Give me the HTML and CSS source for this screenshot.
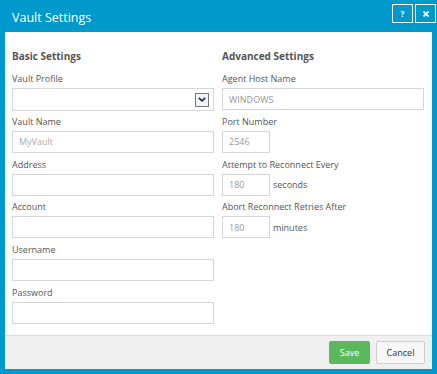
FILE: index.html
```html
<!DOCTYPE html>
<html lang="en">
<head>
    <meta charset="UTF-8">
    <title>Vault Settings</title>
    <link rel="stylesheet" href="styles.css">
</head>
<body>
    <div class="dialog">
        <div class="titlebar">
            <span class="title">Vault Settings</span>
            <div class="title-buttons">
                <button class="tb-btn">?</button>
                <button class="tb-btn">
                    <svg width="6" height="6" viewBox="0 0 6 6"><path d="M0.5 0.5L5.5 5.5M5.5 0.5L0.5 5.5" stroke="#fff" stroke-width="1.8"/></svg>
                </button>
            </div>
        </div>

        <div class="content">
            <div class="column">
                <h3>Basic Settings</h3>
                <label>Vault Profile</label>
                <div class="select">
                    <span class="arrow">
                        <svg width="8" height="5" viewBox="0 0 8 5"><path d="M0.8 0.8L4 3.8L7.2 0.8" fill="none" stroke="#1c2a55" stroke-width="1.6"/></svg>
                    </span>
                </div>
                <label>Vault Name</label>
                <input class="field" type="text" placeholder="MyVault">
                <label>Address</label>
                <input class="field" type="text">
                <label>Account</label>
                <input class="field" type="text">
                <label>Username</label>
                <input class="field" type="text">
                <label>Password</label>
                <input class="field" type="password">
            </div>

            <div class="column">
                <h3>Advanced Settings</h3>
                <label>Agent Host Name</label>
                <input class="field" type="text" value="WINDOWS">
                <label>Port Number</label>
                <input class="field short" type="text" value="2546">
                <label>Attempt to Reconnect Every</label>
                <div class="inline">
                    <input class="field short" type="text" value="180">
                    <span class="unit">seconds</span>
                </div>
                <label>Abort Reconnect Retries After</label>
                <div class="inline">
                    <input class="field short" type="text" value="180">
                    <span class="unit">minutes</span>
                </div>
            </div>
        </div>

        <div class="footer">
            <button class="btn btn-save">Save</button>
            <button class="btn btn-cancel">Cancel</button>
        </div>
    </div>
</body>
</html>
```

FILE: styles.css
```css
* {
    box-sizing: border-box;
    font-family: "Open Sans", sans-serif;
}

body {
    margin: 0;
    background: #fff;
}

.dialog {
    width: 437px;
    height: 374px;
    background: #0099cc;
    padding: 0 5px 5px 5px;
    display: flex;
    flex-direction: column;
}

.titlebar {
    height: 32px;
    display: flex;
    align-items: flex-start;
    justify-content: space-between;
    margin-right: -4px;
}

.title {
    color: #fff;
    font-size: 12.5px;
    line-height: 18px;
    margin: 9px 0 0 7px;
}

.title-buttons {
    display: flex;
    gap: 2px;
    margin-top: 4px;
}

.tb-btn {
    width: 21px;
    height: 19px;
    border: 1px solid #fff;
    background: transparent;
    color: #fff;
    font-size: 8px;
    font-weight: bold;
    padding: 0;
    display: flex;
    align-items: center;
    justify-content: center;
}

.content {
    flex: 1;
    background: #fff;
    padding: 17px 8px 0 7px;
    display: flex;
    gap: 8px;
}

.column {
    width: 202px;
    display: flex;
    flex-direction: column;
}

.column h3 {
    margin: 0 0 10px 0;
    font-size: 10px;
    line-height: 14px;
    color: #555;
}

label {
    font-size: 9px;
    line-height: 12px;
    color: #555;
    margin-bottom: 3px;
}

.field,
.select {
    width: 202px;
    height: 22px;
    border: 1px solid #d6d6d6;
    background: #fff;
    font-size: 9px;
    color: #999;
    padding: 0 6px;
    margin: 0 0 5.75px 0;
    outline: none;
}

.field::placeholder {
    color: #aaa;
}

.field.short {
    width: 48px;
}

.select {
    height: 23px;
    margin-bottom: 4.75px;
    display: flex;
    align-items: center;
    justify-content: flex-end;
    padding: 0 4px;
}

.arrow {
    width: 14px;
    height: 14px;
    border: 1px solid #777;
    background: #f4f4f4;
    display: flex;
    align-items: center;
    justify-content: center;
}

.inline {
    display: flex;
    align-items: center;
    margin-bottom: 5.75px;
}

.inline .field {
    margin: 0;
}

.unit {
    font-size: 9px;
    color: #555;
    margin-left: 3px;
}

.footer {
    height: 34px;
    background: #f0f0f0;
    border-top: 1px solid #dcdcdc;
    display: flex;
    align-items: center;
    justify-content: flex-end;
    gap: 6px;
    padding-right: 7px;
}

.btn {
    height: 23px;
    font-size: 9px;
    border-radius: 2px;
    padding: 0;
}

.btn-save {
    width: 41px;
    background: #5cb85c;
    border: 1px solid #5cb85c;
    color: #fff;
}

.btn-cancel {
    width: 49px;
    background: #f7f7f7;
    border: 1px solid #cfcfcf;
    color: #333;
}
```
